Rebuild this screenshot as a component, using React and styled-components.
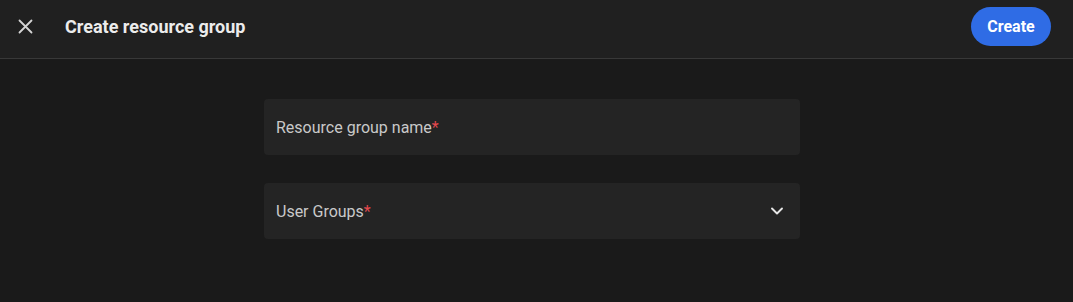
import React from 'react';
import styled, { createGlobalStyle } from 'styled-components';

const GlobalStyle = createGlobalStyle`
  html, body {
    margin: 0;
    padding: 0;
    background: #1a1a1a;
    font-family: Roboto, "Liberation Sans", sans-serif;
  }
`;

const Page = styled.div`
  width: 1073px;
  height: 302px;
  background: #1a1a1a;
  display: flex;
  flex-direction: column;
`;

const Header = styled.header`
  height: 59px;
  box-sizing: border-box;
  background: #202020;
  border-bottom: 1px solid #383838;
  display: flex;
  align-items: center;
  padding: 0 22px 5px 14px;
`;

const CloseButton = styled.button`
  width: 22px;
  height: 22px;
  padding: 0;
  border: none;
  background: none;
  color: #d0d0d0;
  display: flex;
  align-items: center;
  justify-content: center;
  cursor: pointer;
`;

const Title = styled.h1`
  margin: 0 0 0 29px;
  font-size: 18px;
  font-weight: 700;
  color: #ececec;
  flex: 1;
`;

const CreateButton = styled.button`
  height: 39px;
  width: 80px;
  border: none;
  border-radius: 20px;
  background: #2f6ce5;
  color: #fff;
  font-family: Roboto, "Liberation Sans", sans-serif;
  font-size: 16px;
  font-weight: 700;
  cursor: pointer;
`;

const Form = styled.div`
  display: flex;
  flex-direction: column;
  align-items: flex-start;
  gap: 28px;
  padding: 40px 0 0 264px;
`;

const Field = styled.div`
  width: 536px;
  height: 56px;
  box-sizing: border-box;
  background: #242424;
  border-radius: 4px;
  display: flex;
  align-items: center;
  justify-content: space-between;
  padding: 0 16px 0 12px;
`;

const Label = styled.span`
  font-size: 16px;
  color: #c9c9c9;
`;

const Required = styled.span`
  color: #e5484d;
`;

const Chevron = () => (
  <svg width="14" height="14" viewBox="0 0 14 14" fill="none">
    <path d="M2 4.5 L7 9.5 L12 4.5" stroke="#e6e6e6" strokeWidth="1.9" strokeLinecap="round" strokeLinejoin="round" />
  </svg>
);

export default function App() {
  return (
    <Page>
      <GlobalStyle />
      <Header>
        <CloseButton>
          <svg width="15" height="15" viewBox="0 0 15 15">
            <path d="M1.5 1.5 L13.5 13.5 M13.5 1.5 L1.5 13.5" stroke="#d4d4d4" strokeWidth="1.8" strokeLinecap="round" />
          </svg>
        </CloseButton>
        <Title>Create resource group</Title>
        <CreateButton>Create</CreateButton>
      </Header>
      <Form>
        <Field>
          <Label>Resource group name<Required>*</Required></Label>
        </Field>
        <Field>
          <Label>User Groups<Required>*</Required></Label>
          <Chevron />
        </Field>
      </Form>
    </Page>
  );
}
